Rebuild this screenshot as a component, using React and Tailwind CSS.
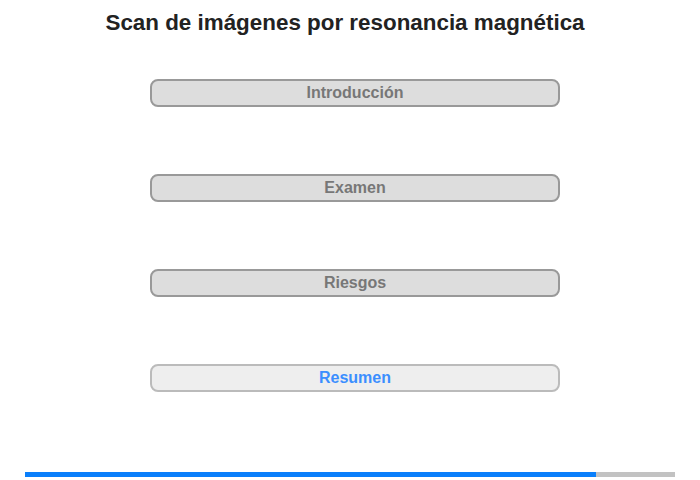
import React from "react";

const sections = [
  { label: "Introducción", active: false },
  { label: "Examen", active: false },
  { label: "Riesgos", active: false },
  { label: "Resumen", active: true },
];

const App = () => {
  const progress = 87.8;

  return (
    <div
      className="w-[700px] h-[480px] bg-white flex flex-col"
      style={{ fontFamily: '"Liberation Sans", Arial, sans-serif' }}
    >
      <h1 className="pt-[10px] pr-[10px] text-center text-[22.4px] leading-[26px] font-bold text-[#222]">
        Scan de imágenes por resonancia magnética
      </h1>

      <div className="mt-[43px] pl-[10px] flex flex-col items-center gap-[67px]">
        {sections.map((s) => (
          <button
            key={s.label}
            className={
              s.active
                ? "w-[410px] h-[28px] rounded-[8px] border-2 border-[#bbb] bg-[#eee] text-[16px] font-bold text-[#3b8eff]"
                : "w-[410px] h-[28px] rounded-[8px] border-2 border-[#999] bg-[#ddd] text-[16px] font-bold text-[#777]"
            }
          >
            {s.label}
          </button>
        ))}
      </div>

      <div className="mt-auto mb-[3px] mx-[25px] h-[5px] bg-[#c2c2c2]">
        <div className="h-full bg-[#0a7ffb]" style={{ width: `${progress}%` }} />
      </div>
    </div>
  );
};

export default App;
